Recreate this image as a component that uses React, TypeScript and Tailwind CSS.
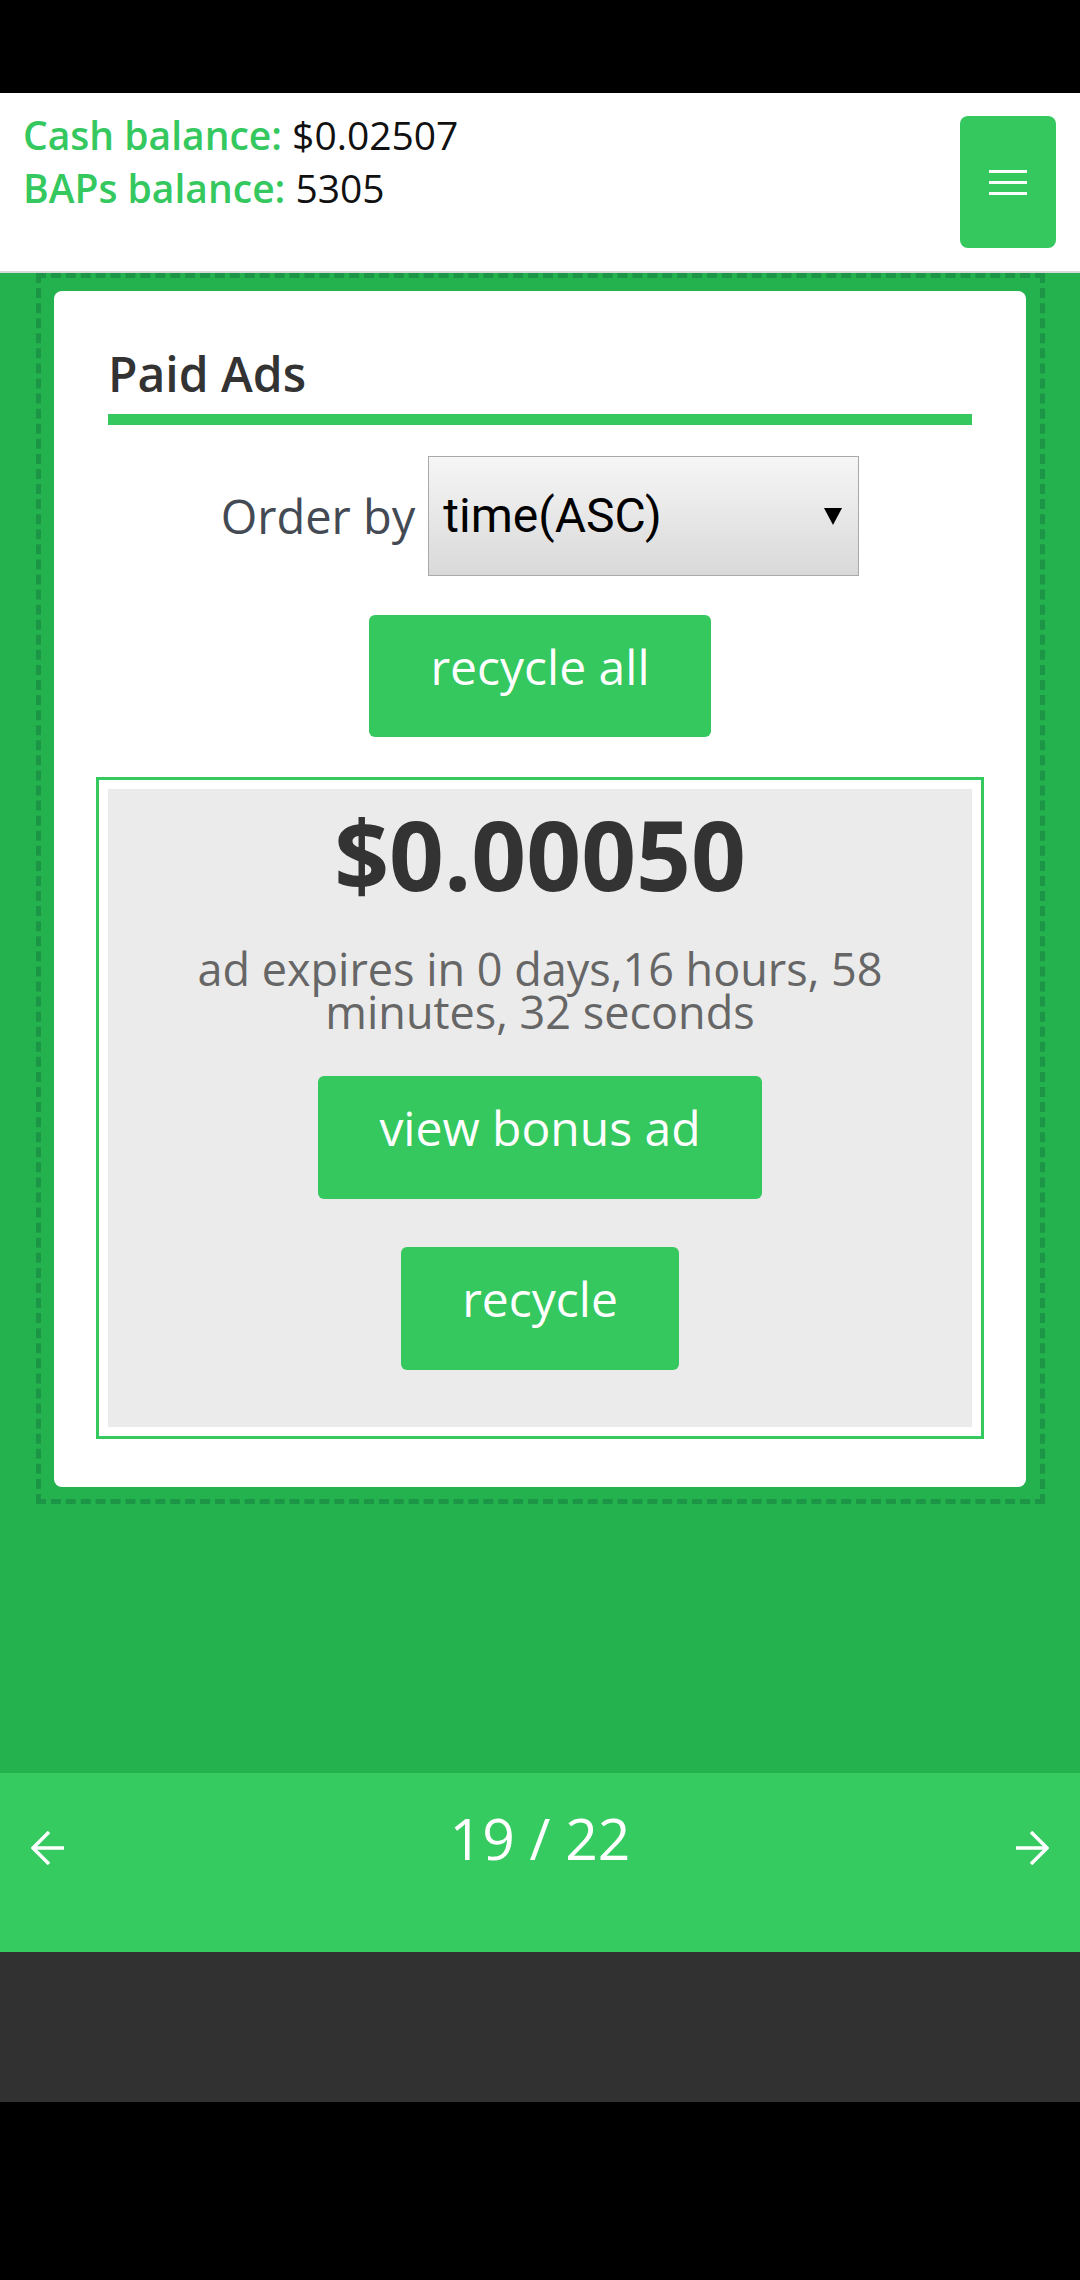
export default function App() {
  const font = { fontFamily: '"Open Sans", "Noto Sans", sans-serif' };

  return (
    <div className="w-[1080px] h-[2280px] flex flex-col bg-black" style={font}>
      {/* status bar area */}
      <div className="h-[93px] bg-black" />

      {/* Header with balances */}
      <header className="h-[180px] bg-white border-b-2 border-[#d9d9d9] flex justify-between pl-[23px] pr-[24px]">
        <div className="pt-[15px] text-[39px] leading-[53px]">
          <div>
            <span className="font-semibold text-[#34c85f]">Cash balance:</span>{" "}
            <span className="text-[#111]">$0.02507</span>
          </div>
          <div>
            <span className="font-semibold text-[#34c85f]">BAPs balance:</span>{" "}
            <span className="text-[#111]">5305</span>
          </div>
        </div>
        <button className="self-center w-[96px] h-[132px] rounded-[8px] bg-[#34c85f] flex flex-col items-center justify-center gap-[8px]">
          <span className="block w-[38px] h-[3px] bg-white" />
          <span className="block w-[38px] h-[3px] bg-white" />
          <span className="block w-[38px] h-[3px] bg-white" />
        </button>
      </header>

      {/* Green body */}
      <main className="h-[1500px] bg-[#24b24e]">
        <div className="ml-[36px] w-[1009px] border-[5px] border-dashed border-[#1c9646] p-[13px] pr-[14px] pb-[12px]">
          <div className="bg-white rounded-[8px] px-[42px] pt-[50px] pb-[48px]">
            {/* title */}
            <h1 className="mx-[12px] pb-[8px] border-b-[11px] border-[#34c85f] text-[48px] leading-[65px] font-semibold text-[#333]">
              Paid Ads
            </h1>

            {/* order by */}
            <div className="mt-[31px] flex items-center justify-center gap-[13px]">
              <span className="text-[47px] text-[#434a54]">Order by</span>
              <div
                className="w-[431px] h-[120px] border border-[#a9a9a9] bg-gradient-to-b from-[#f6f6f6] to-[#d9d9d9] flex items-center justify-between pl-[14px] pr-[16px]"
                style={{ fontFamily: 'Roboto, "Liberation Sans", sans-serif' }}
              >
                <span className="text-[48px] text-black">time(ASC)</span>
                <svg width="18" height="17" viewBox="0 0 18 17">
                  <polygon points="0,0 18,0 9,17" fill="#000" />
                </svg>
              </div>
            </div>

            <div className="mt-[39px] flex justify-center">
              <button className="h-[122px] px-[61px] pt-[21px] pb-[39px] rounded-[6px] bg-[#34c85f] text-white text-[48px] leading-[62px]">
                recycle all
              </button>
            </div>

            {/* ad item */}
            <div className="mt-[40px] border-[3px] border-[#34c85f] p-[9px]">
              <div className="bg-[#ebebeb] flex flex-col items-center pb-[57px]">
                <div className="text-[96px] leading-[130px] font-bold text-[#333]">$0.00050</div>
                <p className="mt-[28px] px-[20px] text-center text-[45px] leading-[43px] text-[#666]">
                  ad expires in 0 days,16 hours, 58 minutes, 32 seconds
                </p>
                <button className="mt-[43px] h-[123px] px-[61px] pt-[21px] pb-[40px] rounded-[6px] bg-[#34c85f] text-white text-[48px] leading-[62px]">
                  view bonus ad
                </button>
                <button className="mt-[48px] h-[123px] px-[61px] pt-[21px] pb-[40px] rounded-[6px] bg-[#34c85f] text-white text-[48px] leading-[62px]">
                  recycle
                </button>
              </div>
            </div>
          </div>
        </div>
      </main>

      {/* pager */}
      <nav className="h-[179px] bg-[#35cb60] flex justify-between items-start px-[31px]">
        <svg className="mt-[58px]" width="34" height="34" viewBox="0 0 34 34" fill="none" stroke="#fff" strokeWidth="3.5">
          <path d="M18 1 L2 17 L18 33" />
          <path d="M2 17 H33" />
        </svg>
        <span className="mt-[26px] text-[57px] leading-[78px] text-white">19 / 22</span>
        <svg className="mt-[58px]" width="34" height="34" viewBox="0 0 34 34" fill="none" stroke="#fff" strokeWidth="3.5">
          <path d="M16 1 L32 17 L16 33" />
          <path d="M32 17 H1" />
        </svg>
      </nav>

      <div className="h-[150px] bg-[#313131]" />
      <div className="h-[178px] bg-black" />
    </div>
  );
}
